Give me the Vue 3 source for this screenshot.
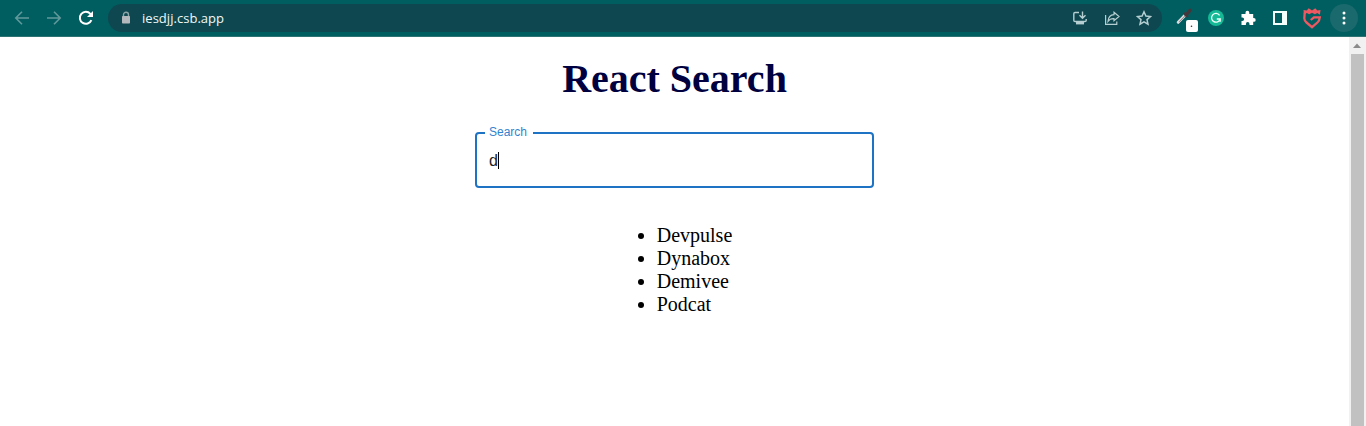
<script setup>
import { ref } from 'vue'

const address = 'iesdjj.csb.app'
const query = ref('d')
const results = ['Devpulse', 'Dynabox', 'Demivee', 'Podcat']
</script>

<template>
  <div class="window">
    <header class="toolbar">
      <nav class="navigation">
        <svg class="icon dim" viewBox="0 0 16 16"><path d="M15 8H2M8 1.8 1.8 8 8 14.2" /></svg>
        <svg class="icon dim" viewBox="0 0 16 16"><path d="M1 8h13M8 1.8 14.2 8 8 14.2" /></svg>
        <svg class="icon reload" viewBox="0 0 16 16">
          <path d="M13.4 10.2A6 6 0 1 1 12.4 3.9L14 5.6" />
          <path class="solid" d="M15 1v6H9z" />
        </svg>
      </nav>

      <div class="omnibox">
        <svg class="lock" viewBox="0 0 10 14">
          <path d="M2.5 6V3.7a2.5 2.5 0 0 1 5 0V6" />
          <rect x="1" y="5" width="8" height="7.6" rx=".8" />
        </svg>
        <span class="address">{{ address }}</span>
        <div class="page-actions">
          <svg class="icon" viewBox="0 0 16 16">
            <path d="M7 2.5H3Q1.8 2.5 1.8 3.7v6.6q0 1.2 1.2 1.2h10q1.2 0 1.2-1.2V9M10.5 1.5v6.3M7.5 5.2l3 3 3-3" />
            <path class="solid" d="M4 11.5h8V14.4H4z" />
          </svg>
          <svg class="icon share" viewBox="0 0 16 16">
            <path d="M1.6 5v9.4h11.2V11.5M10 2.2l5 4.3-5 4.3V8.6Q6 8.4 4 11.3 4.5 5 10 4.6z" />
          </svg>
          <svg class="icon" viewBox="0 0 16 16">
            <path class="star" d="m8 1.8 1.9 4.3 4.6.4L11 9.6l1 4.6-4-2.4-4 2.4 1-4.6-3.5-3.1 4.6-.4z" />
          </svg>
        </div>
      </div>

      <div class="extensions">
        <svg class="picker" viewBox="0 0 24 26">
          <path d="M4.2 16.3 11.5 8.8" stroke="#ddd9dc" stroke-width="3" stroke-linecap="round" />
          <path d="M5.2 15.8 11.5 9.3" stroke="#74716f" stroke-width=".8" />
          <path d="m9.8 7 4.2 4.2" stroke="#44373c" stroke-width="2" />
          <path d="m12 8.8 4.2-4.6" stroke="#44373c" stroke-width="3.4" stroke-linecap="round" />
          <rect x="12" y="14" width="12" height="12" rx="2" fill="#fff" />
          <circle cx="17.5" cy="20.3" r=".8" fill="#333" />
        </svg>
        <svg class="grammar" viewBox="0 0 16 16">
          <circle cx="8" cy="8" r="8" fill="#15b995" />
          <path d="M11.6 5.3A4.4 4.4 0 1 0 12.2 9H8.8M12.2 8.8v3" stroke="#effffb" stroke-width="1.3" />
        </svg>
        <svg class="puzzle" viewBox="0 0 16 16">
          <path d="M1.5 4h4V2.7a1.9 1.9 0 0 1 3.8 0V4h3.9v4h.6a1.9 1.9 0 0 1 0 3.8h-.6V15H9.5v-1.1a1.8 1.8 0 0 0-3.6 0V15H1.5v-3.9h.8a1.8 1.8 0 0 0 0-3.6h-.8z" fill="#fff" />
        </svg>
        <svg class="panel" viewBox="0 0 14 14">
          <rect x="1" y="1" width="12" height="12" stroke="#f5fffb" stroke-width="2" />
          <path d="M9 1h4v12H9z" fill="#f5fffb" />
        </svg>
        <svg class="crest" viewBox="0 0 20 22">
          <path class="crown" d="M1.5 3 4.7 3.6 6.7 1.3 10 3.6l3.3-2.3 2 2.3 3.2-.6-.6 4.7-2.6-1.8-2.5 1.3L10 5.7 7.2 7.2 4.8 5.9 2 7.7z" />
          <path d="M2.7 5.5 2.3 11.5Q2.5 13.8 4.5 15.5l5.5 4.7 5.4-4.7q2.2-2 2.4-5.2h-5.9L8.8 13" />
        </svg>
        <span class="menu">
          <svg viewBox="0 0 4 14"><circle cx="2" cy="2" r="1.5" /><circle cx="2" cy="7" r="1.5" /><circle cx="2" cy="12" r="1.5" /></svg>
        </span>
      </div>
    </header>

    <div class="viewport">
      <main class="content">
        <h1>React Search</h1>
        <label class="field">
          <span class="field-label">Search</span>
          <span class="field-value">{{ query }}<i class="caret"></i></span>
        </label>
        <ul>
          <li v-for="result in results" :key="result">{{ result }}</li>
        </ul>
      </main>
      <div class="scrollbar">
        <svg viewBox="0 0 16 17"><path d="m4 11 4-4.5 4 4.5z" fill="#8b8b8b" /></svg>
        <div class="thumb"></div>
      </div>
    </div>
  </div>
</template>

<style>
body {
  margin: 0;
  overflow: hidden;
}
</style>

<style scoped>
.window {
  display: flex;
  flex-direction: column;
  height: 426px;
  background: #fff;
}
svg {
  display: block;
  flex: none;
  fill: none;
}
.toolbar {
  display: flex;
  box-sizing: border-box;
  flex: none;
  height: 37px;
  padding-top: 4px;
  background: #005e60;
  border-bottom: 1px solid #2d7374;
}
.navigation {
  display: flex;
  gap: 16px;
  width: 94px;
  height: 28px;
  padding-left: 14px;
  align-items: center;
}
.icon {
  width: 16px;
  height: 16px;
  stroke: #b5ced1;
  stroke-width: 1.4;
}
.dim {
  stroke: #61999b;
  stroke-width: 1.6;
}
.reload {
  stroke: #fff;
  stroke-width: 2;
}
.solid {
  fill: #b5ced1;
  stroke: none;
}
.reload .solid {
  fill: #fff;
}
.star {
  stroke-width: 1.5;
}
.share {
  stroke-width: 1.2;
}
.omnibox {
  display: flex;
  box-sizing: border-box;
  width: 1054px;
  height: 28px;
  padding: 0 10px 0 13px;
  align-items: center;
  background: #0e474f;
  border-radius: 14px;
}
.lock {
  width: 10px;
  height: 14px;
}
.lock path {
  stroke: #8aa5a8;
  stroke-width: 1.4;
}
.lock rect {
  fill: #b3b8bc;
}
.address {
  margin-left: 11px;
  color: #f0f8f8;
  font: 13px/20px "Open Sans", "Noto Sans", sans-serif;
  letter-spacing: 0.03px;
}
.page-actions {
  display: flex;
  gap: 16px;
  margin-left: auto;
}
.extensions {
  display: flex;
  height: 28px;
  align-items: center;
}
.picker {
  width: 24px;
  height: 26px;
  margin: 2px 0 0 12px;
}
.grammar {
  width: 16px;
  height: 16px;
  margin-left: 10px;
}
.puzzle {
  width: 16px;
  height: 16px;
  margin-left: 16px;
}
.panel {
  width: 14px;
  height: 14px;
  margin-left: 17px;
}
.crest {
  width: 20px;
  height: 22px;
  margin-left: 15px;
  stroke: #f05861;
  stroke-width: 2.3;
}
.crest .crown {
  fill: #f05861;
  stroke: none;
}
.menu {
  display: flex;
  width: 28px;
  height: 28px;
  margin-left: 8px;
  align-items: center;
  justify-content: center;
  background: #1a696d;
  border-radius: 50%;
}
.menu svg {
  width: 4px;
  height: 14px;
  fill: #fff;
}
.viewport {
  display: flex;
  flex: 1;
  min-height: 0;
}
.content {
  display: flex;
  flex: 1;
  flex-direction: column;
  align-items: center;
  color: #000;
  font: 20px/23px "Liberation Serif", "Times New Roman", serif;
}
h1 {
  margin: 19px 0 30px;
  color: #000040;
  font-size: 40px;
  line-height: 46px;
}
.field {
  position: relative;
  display: flex;
  box-sizing: border-box;
  width: 399px;
  height: 56px;
  padding: 0 12px;
  align-items: center;
  border: 2px solid #1e73c5;
  border-radius: 4px;
  font-family: "Liberation Sans", Arial, sans-serif;
}
.field-label {
  position: absolute;
  top: -9px;
  left: 8px;
  width: 44px;
  padding-left: 4px;
  box-sizing: content-box;
  color: #3384cf;
  background: #fff;
  font-size: 12px;
  line-height: 14px;
}
.field-value {
  display: flex;
  align-items: center;
  color: #222;
  font-size: 16px;
}
.caret {
  width: 1px;
  height: 17px;
  background: #000;
}
ul {
  margin: 36px 0 0;
  padding-left: 40px;
}
.scrollbar {
  display: flex;
  flex-direction: column;
  width: 17px;
  background: #f1f1f1;
}
.scrollbar svg {
  width: 16px;
  height: 17px;
}
.thumb {
  flex: 1;
  margin: 0 2px;
  background: #c1c1c1;
}
</style>
